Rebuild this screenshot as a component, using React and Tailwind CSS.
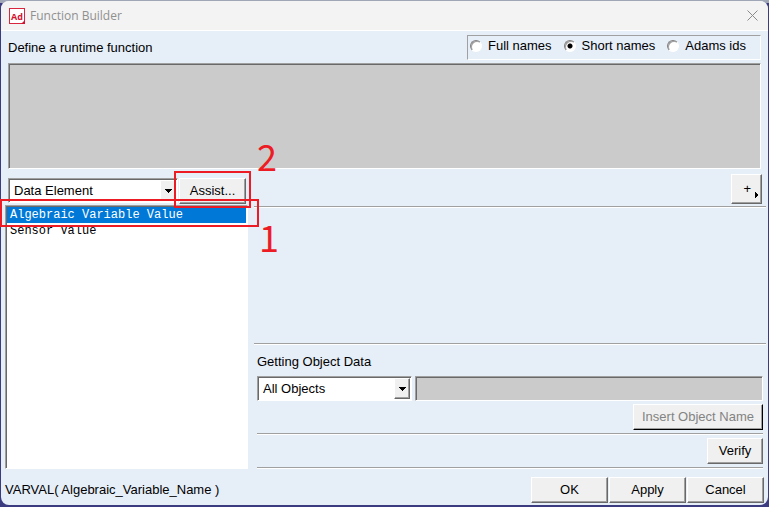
import { useState } from "react";

const NAME_MODES = ["Full names", "Short names", "Adams ids"];
const FUNCTIONS = ["Algebraic Variable Value", "Sensor Value"];

const sunken =
  "border border-t-[#a0a0a0] border-l-[#a0a0a0] border-r-white border-b-white shadow-[inset_1px_1px_0_#696969]";
const raised =
  "border border-t-white border-l-white border-r-[#696969] border-b-[#696969] shadow-[inset_-1px_-1px_0_#a0a0a0] bg-[#f0f0f0]";

function Button({ children, className = "w-[77px]", ...props }) {
  return (
    <button type="button" className={`${raised} h-[26px] shrink-0 text-center ${className}`} {...props}>
      {children}
    </button>
  );
}

function Combo({ label, value, className }) {
  return (
    <div className={`${sunken} grid h-[25px] shrink-0 bg-white p-px ${className}`}>
      <select
        aria-label={label}
        defaultValue={value}
        className="col-start-1 row-start-1 w-full appearance-none bg-transparent pl-1 outline-none"
      >
        <option>{value}</option>
      </select>
      <span
        className={`${raised} pointer-events-none col-start-1 row-start-1 flex w-4 items-center justify-center justify-self-end`}
      >
        <svg width="7" height="4" viewBox="0 0 7 4" shapeRendering="crispEdges">
          <path d="M0 0h7v1h-1v1h-1v1h-1v1h-1v-1h-1v-1h-1v-1h-1z" />
        </svg>
      </span>
    </div>
  );
}

function Separator() {
  return <hr className="h-[2px] shrink-0 border-t border-b border-t-[#a0a0a0] border-b-white" />;
}

function TitleBar() {
  return (
    <header className="flex h-[30px] shrink-0 items-center border-b border-white bg-[#f3f3f3] pr-[10px] pl-2">
      <svg width="16" height="16" viewBox="0 0 16 16">
        <rect x="0.5" y="0.5" width="15" height="15" fill="#fff" stroke="#d9263f" />
        <path d="M12 16h4v-4z" fill="#d5122f" />
        <text x="2" y="12" fontSize="9" fontWeight="700" fontFamily="Open Sans, sans-serif" fill="#d5122f">
          Ad
        </text>
      </svg>
      <h1 className="ml-[5px] grow font-['Open_Sans',sans-serif] text-[12px] text-[#909090]">
        Function Builder
      </h1>
      <button type="button" aria-label="Close">
        <svg width="11" height="11" viewBox="0 0 11 11" fill="none" stroke="#8a8a8a">
          <path d="M.5 .5l10 10M10.5 .5l-10 10" />
        </svg>
      </button>
    </header>
  );
}

export default function App() {
  const [mode, setMode] = useState("Short names");
  const [selected, setSelected] = useState(FUNCTIONS[0]);

  return (
    <div className="relative flex min-h-screen flex-col bg-[linear-gradient(#9fa6b6_3px,#3b3b80_3px)] px-px pt-px pb-[2px] font-['Liberation_Sans',Arial,sans-serif] text-[13px] leading-4 text-black">
      <div className="flex grow flex-col overflow-hidden rounded-lg bg-[#e6eef8]">
        <TitleBar />

        <main className="flex grow flex-col pt-1">
          <div className="flex items-center justify-between pr-[7px] pl-[7px]">
            <label htmlFor="definition">Define a runtime function</label>
            <fieldset className="flex h-[25px] w-[294px] items-center gap-3 border border-t-[#a0a0a0] border-l-[#a0a0a0] border-r-white border-b-white pb-1 pl-[2px]">
              {NAME_MODES.map((name) => (
                <label key={name} className="flex items-center gap-[6px]">
                  <input
                    type="radio"
                    name="mode"
                    checked={mode === name}
                    onChange={() => setMode(name)}
                    className="size-3 appearance-none rounded-full border border-t-[#808080] border-l-[#808080] border-r-white border-b-white bg-white shadow-[inset_1px_1px_0_#a0a0a0] checked:bg-[radial-gradient(circle,#000_2px,#fff_3px)]"
                  />
                  {name}
                </label>
              ))}
            </fieldset>
          </div>

          <textarea
            id="definition"
            className={`${sunken} mx-[7px] mt-[3px] h-[106px] resize-none bg-[#cbcbcb] outline-none`}
          />

          <div className="flex grow">
            <section className="flex w-[247px] shrink-0 flex-col pt-[9px] pl-1">
              <div className="flex gap-px pb-px pl-[3px]">
                <Combo label="Category" value="Data Element" className="w-[170px]" />
                <Button className="w-[67px]">Assist...</Button>
              </div>
              <ul
                role="listbox"
                aria-label="Functions"
                className={`${sunken} grow bg-white p-px font-['Liberation_Mono',monospace] text-[12px]`}
              >
                {FUNCTIONS.map((name) => (
                  <li
                    key={name}
                    role="option"
                    aria-selected={selected === name}
                    onClick={() => setSelected(name)}
                    className="pl-[3px] aria-selected:bg-[#0078d7] aria-selected:text-white"
                  >
                    {name}
                  </li>
                ))}
              </ul>
            </section>

            <section className="flex grow flex-col pt-[5px] pr-[2px] pl-[6px]">
              <div className="flex justify-end pr-1 pb-[2px]">
                <button
                  type="button"
                  aria-label="Insert operator"
                  className={`${raised} flex h-[30px] w-[31px] items-center justify-end pr-[3px]`}
                >
                  <span>+</span>
                  <svg width="3" height="6" viewBox="0 0 3 6" className="mt-3 ml-1" shapeRendering="crispEdges">
                    <path d="M0 0h1v1h1v1h1v2h-1v1h-1v1h-1z" />
                  </svg>
                </button>
              </div>
              <Separator />
              <div className="grow" />
              <Separator />
              <div className="flex flex-col pt-[9px] pr-[3px] pl-[3px]">
                <label htmlFor="object">Getting Object Data</label>
                <div className="mt-[6px] flex gap-[3px]">
                  <Combo label="Object type" value="All Objects" className="w-[155px]" />
                  <input id="object" className={`${sunken} h-[25px] min-w-0 grow bg-[#cbcbcb] outline-none`} />
                </div>
                <div className="flex justify-end py-[3px]">
                  <Button disabled className="w-[130px] border-r-black border-b-black text-[#838383]">
                    Insert Object Name
                  </Button>
                </div>
                <Separator />
                <div className="flex justify-end py-[3px]">
                  <Button className="w-[56px]">Verify</Button>
                </div>
                <Separator />
              </div>
            </section>
          </div>
        </main>

        <footer className="flex items-center justify-between pt-2 pr-1 pb-[2px] pl-1">
          <output>VARVAL( Algebraic_Variable_Name )</output>
          <div className="flex gap-px">
            <Button>OK</Button>
            <Button>Apply</Button>
            <Button>Cancel</Button>
          </div>
        </footer>
      </div>

      {/* step markers drawn over the dialog */}
      <div className="pointer-events-none absolute top-[171px] left-[174px] h-[37px] w-[77px] border-2 border-[#ed1c24]" />
      <div className="pointer-events-none absolute top-[199px] left-0 h-[28px] w-[259px] border-2 border-[#ed1c24]" />
      <span className="absolute top-[135px] left-[257px] font-['Noto_Sans_CJK_SC',sans-serif] text-[36px] leading-10 text-[#ed1c24]">
        2
      </span>
      <span className="absolute top-[216px] left-[259px] font-['Noto_Sans_CJK_SC',sans-serif] text-[36px] leading-10 text-[#ed1c24]">
        1
      </span>
    </div>
  );
}
